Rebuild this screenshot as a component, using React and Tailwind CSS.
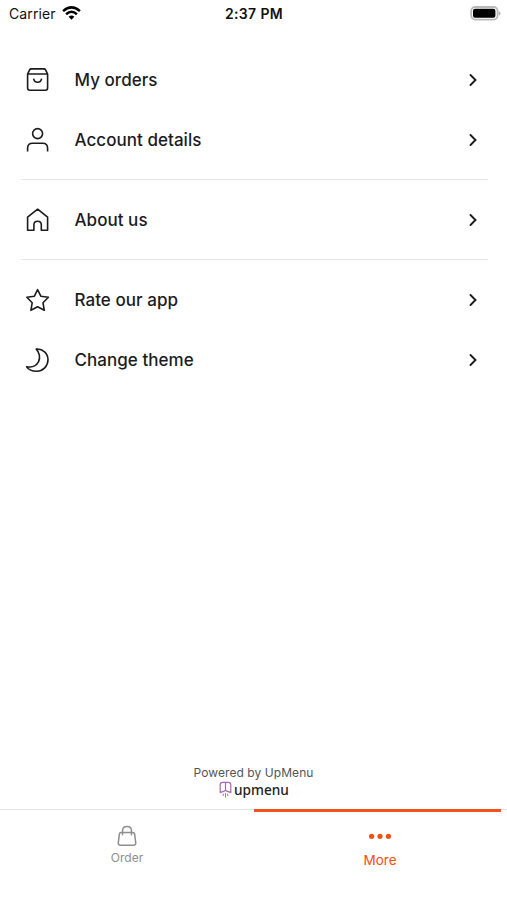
import React from "react";

const ICONS = {
  orders: (
    <>
      <path d="M5.6 10.2 L7.6 5.8 Q8.1 4.9 9.2 4.9 H22 Q23.1 4.9 23.6 5.8 L25.6 10.2 V24 Q25.6 26.2 23.4 26.2 H7.8 Q5.6 26.2 5.6 24 Z" />
      <path d="M5.6 10 H25.6 M11.6 14.6 Q12.2 18.2 15.6 18.2 Q19 18.2 19.6 14.6" />
    </>
  ),
  account: (
    <>
      <circle cx="15.6" cy="9.6" r="5" />
      <path d="M5.6 27.6 V24.2 Q5.6 19.3 10.5 19.3 H20.7 Q25.6 19.3 25.6 24.2 V27.6" />
    </>
  ),
  about: (
    <path d="M15.6 5.2 L25.6 13.2 V26.2 H19.3 V20.7 Q19.3 17.2 15.6 17.2 Q11.9 17.2 11.9 20.7 V26.2 H5.6 V13.2 Z" />
  ),
  rate: (
    <path d="M15.6 5.6 L18.8 12.2 L26.4 13.3 L21 18.8 L22.3 26.3 L15.6 22.8 L8.9 26.3 L10.2 18.8 L4.8 13.3 L12.4 12.2 Z" />
  ),
  theme: (
    <path d="M14.2 5.1 C20.8 4.4 26 9.5 26 15.8 C26 22.2 21 27.2 14.8 27.2 C10.3 27.2 6.4 25.6 4.7 22.8 C10.2 23.8 14.8 21.5 16.6 17.6 C18.4 13.7 17.6 8.4 14.2 5.1 Z" />
  ),
};

function Row({ icon, label }) {
  return (
    <button className="flex h-[60px] w-full items-center pl-[22px] text-left">
      <svg width="32" height="32" viewBox="0 0 32 32" fill="none" stroke="#1c1c1e" strokeWidth="1.6" strokeLinejoin="round" className="shrink-0">
        {ICONS[icon]}
      </svg>
      <span className="ml-[20.5px] whitespace-nowrap text-[17px] font-medium leading-6 tracking-[0.04px] text-[#1c1c1e]">{label}</span>
      <svg width="12" height="16" viewBox="0 0 12 16" fill="none" stroke="#1c1c1e" strokeWidth="1.9" strokeLinecap="round" className="ml-auto mr-[28px]">
        <path d="M3.5 3 L8.5 8 L3.5 13" />
      </svg>
    </button>
  );
}

function Divider() {
  return <div className="ml-[21px] mr-[19px] mb-[10px] mt-[9px] h-px bg-[#e6e6e6]" />;
}

export default function App() {
  return (
    <div className="flex h-[900px] w-[507px] flex-col overflow-hidden bg-white font-['Inter',sans-serif]">
      <header className="grid h-7 grid-cols-3 items-center pl-[9px] pr-[6px] text-[#111]">
        <div className="flex items-center gap-[6px] text-[14px] leading-7">
          <span className="tracking-[0.1px]">Carrier</span>
          <svg width="19" height="14" viewBox="0 0 19 14" fill="none" stroke="#000" strokeWidth="2.5" className="-mt-0.5">
            <path d="M1.1 5.1 Q9.5 -2.4 17.9 5.1" />
            <path d="M4.1 8.2 Q9.5 3.4 14.9 8.2" />
            <path d="M9.5 13.7 L6.6 10.7 Q9.5 8.3 12.4 10.7 Z" fill="#000" stroke="none" />
          </svg>
        </div>
        <span className="-mt-px pr-[2px] text-center text-[14px] font-semibold tracking-[0.35px]">2:37 PM</span>
        <svg width="31" height="15" viewBox="0 0 31 15" className="ml-auto -mt-0.5">
          <rect x="1.2" y="1" width="26.4" height="12.6" rx="4" fill="#fff" stroke="#b9b9b9" strokeWidth="1.8" />
          <rect x="3" y="2.8" width="22.4" height="9" rx="2" fill="#000" />
          <path d="M28.8 5 Q32.4 7.4 28.8 9.8 Z" fill="#b5b5b5" />
        </svg>
      </header>

      <main className="flex flex-1 flex-col pt-[22px]">
        <Row icon="orders" label="My orders" />
        <Row icon="account" label="Account details" />
        <Divider />
        <Row icon="about" label="About us" />
        <Divider />
        <Row icon="rate" label="Rate our app" />
        <Row icon="theme" label="Change theme" />

        <div className="mt-auto flex flex-col items-center pb-[11px]">
          <span className="text-[12px] leading-4 tracking-[0.07px] text-[#555]">Powered by UpMenu</span>
          <div className="flex h-[17px] items-center gap-[2px]">
            <svg width="13" height="17" viewBox="0 0 13 17" fill="none" stroke="#a767b5" strokeWidth="1.2">
              <path d="M1.2 11.4 V3.8 Q1.2 1.4 3.6 1.4 H9.4 Q11.8 1.4 11.8 3.8 V11.4 L9 10.6 Q7.2 10.2 6.5 9.2 Q5.8 10.2 4 10.6 Z M6.5 1.4 V9.2" />
              <path d="M4.3 12.6 V15 M6.5 12 V16.6 M8.7 12.6 V15" strokeWidth="0.9" />
            </svg>
            <span className="w-[55px] origin-left scale-x-[0.91] whitespace-nowrap font-['Noto_Sans',sans-serif] text-[15px] font-medium leading-[17px] text-[#222]">upmenu</span>
          </div>
        </div>
      </main>

      <nav className="grid h-[91px] grid-cols-[254px_247px] border-t border-[#e4e4e4]">
        <button className="flex flex-col items-center pt-[15px] text-[#8e8e8e]">
          <svg width="22" height="22" viewBox="0 0 22 22" fill="none" stroke="currentColor" strokeWidth="1.5" strokeLinejoin="round" strokeLinecap="round">
            <path d="M5.1 7.4 H16.9 Q18.4 7.4 18.6 8.9 L19.7 17.6 Q20 20.2 17.6 20.2 H4.4 Q2 20.2 2.3 17.6 L3.4 8.9 Q3.6 7.4 5.1 7.4 Z" />
            <path d="M6.5 9.8 V6 Q6.5 1.6 11 1.6 Q15.5 1.6 15.5 6 V9.8" />
          </svg>
          <span className="mt-[3px] text-[12px] leading-4">Order</span>
        </button>
        <button className="-mt-px flex flex-col items-center border-t-[3px] border-[#f4511e] pl-[5px] text-[#f2500f]">
          <svg width="24" height="8" viewBox="0 0 24 8" fill="currentColor" className="mt-[20px]">
            <circle cx="3.6" cy="4.3" r="2.6" />
            <circle cx="12" cy="4.3" r="2.6" />
            <circle cx="20.4" cy="4.3" r="2.6" />
          </svg>
          <span className="mt-[12px] text-[13.5px] leading-4">More</span>
        </button>
      </nav>
    </div>
  );
}
